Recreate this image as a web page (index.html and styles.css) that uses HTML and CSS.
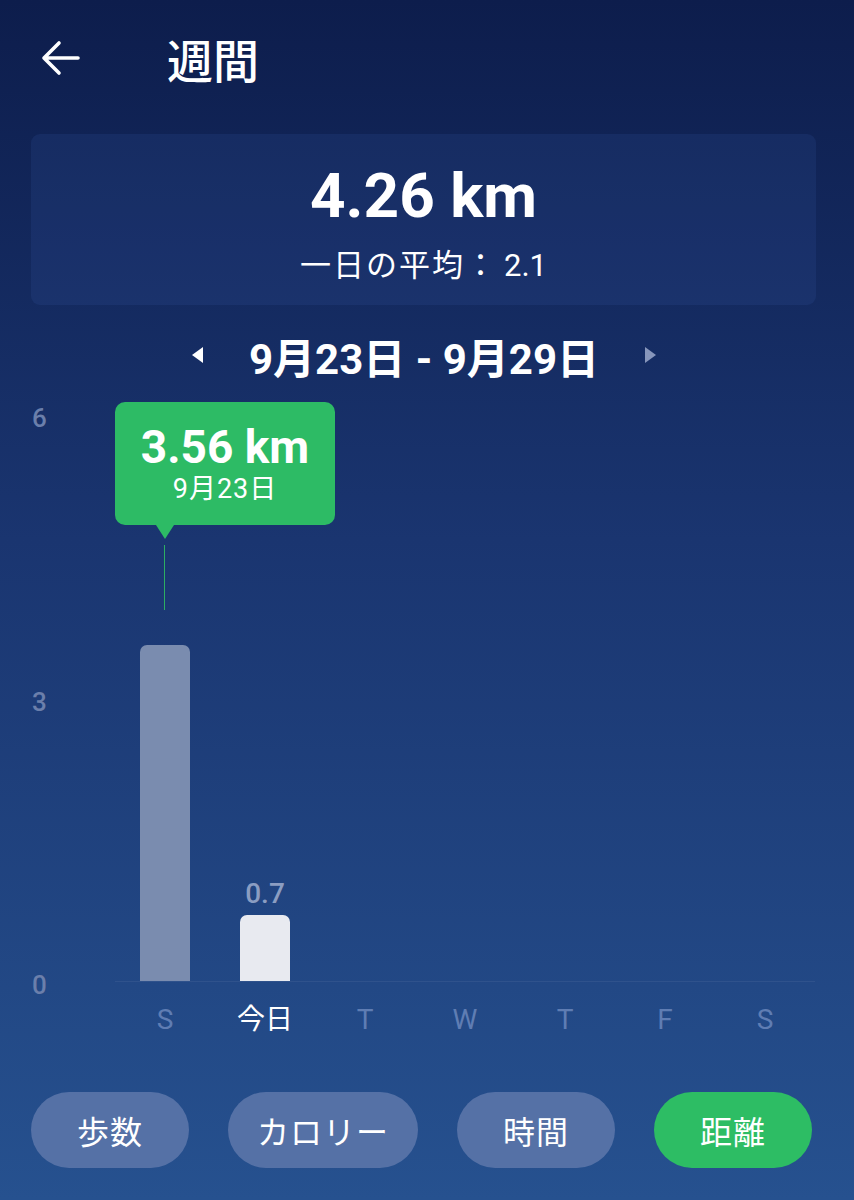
FILE: index.html
```html
<!DOCTYPE html>
<html lang="ja">
<head>
    <meta charset="UTF-8">
    <meta name="viewport" content="width=device-width, initial-scale=1.0">
    <title>週間</title>
    <link rel="stylesheet" href="styles.css">
</head>
<body>
    <!-- Cabeçalho -->
    <div class="topo">
        <svg class="voltar" width="40" height="40" viewBox="0 0 40 40">
            <path d="M38 20H4M19 5L4 20L19 35" fill="none" stroke="#fff" stroke-width="3.6" stroke-linecap="round" stroke-linejoin="round"/>
        </svg>
        <span class="titulo">週間</span>
    </div>

    <!-- Resumo -->
    <div class="resumo">
        <div class="total">4.26 km</div>
        <div class="media">一日の平均：<span class="numero">2.1</span></div>
    </div>

    <!-- Período -->
    <div class="periodo">
        <span class="seta esquerda"></span>
        <span class="datas">9月23日 - 9月29日</span>
        <span class="seta direita"></span>
    </div>

    <!-- Gráfico -->
    <div class="grafico">
        <div class="eixo">
            <span>6</span>
            <span>3</span>
            <span>0</span>
        </div>
        <div class="area">
            <div class="barras">
                <div class="coluna"><div class="barra passada" style="height: 336px"></div></div>
                <div class="coluna"><span class="valor">0.7</span><div class="barra hoje" style="height: 66px"></div></div>
                <div class="coluna"></div>
                <div class="coluna"></div>
                <div class="coluna"></div>
                <div class="coluna"></div>
                <div class="coluna"></div>

                <div class="dica">
                    <div class="dica-valor">3.56 km</div>
                    <div class="dica-data">9月23日</div>
                </div>
                <div class="dica-linha"></div>
            </div>
            <div class="dias">
                <span>S</span>
                <span class="ativo">今日</span>
                <span>T</span>
                <span>W</span>
                <span>T</span>
                <span>F</span>
                <span>S</span>
            </div>
        </div>
    </div>

    <!-- Abas -->
    <div class="abas">
        <button>歩数</button>
        <button>カロリー</button>
        <button>時間</button>
        <button class="selecionada">距離</button>
    </div>
</body>
</html>
```

FILE: styles.css
```css
body {
    margin: 0;
    width: 854px;
    height: 1200px;
    overflow: hidden;
    font-family: Roboto, "Noto Sans CJK JP", sans-serif;
    color: #fff;
    background: linear-gradient(#0d1d4c 0%, #1a3570 45%, #26518f 100%);
}
.topo {
    height: 116px;
    display: flex;
    align-items: center;
    padding-left: 40px;
}
.titulo {
    margin-left: 87px;
    font-size: 46px;
    font-weight: 500;
}
.resumo {
    margin: 18px 38px 0 31px;
    height: 171px;
    border-radius: 9px;
    background: rgba(70, 110, 190, 0.13);
    text-align: center;
    box-sizing: border-box;
    padding-top: 26px;
}
.total {
    font-size: 62px;
    font-weight: 700;
    line-height: 72px;
}
.media {
    margin-top: 14px;
    font-size: 31px;
    line-height: 40px;
    letter-spacing: 2px;
}
.media .numero {
    margin-left: 6px;
    letter-spacing: 0;
}
.periodo {
    margin-top: 20px;
    height: 60px;
    display: flex;
    align-items: center;
    justify-content: center;
    gap: 46px;
    padding-right: 6px;
}
.datas {
    font-size: 42px;
    font-weight: 700;
}
.seta {
    width: 0;
    height: 0;
    border-top: 8px solid transparent;
    border-bottom: 8px solid transparent;
}
.esquerda {
    border-right: 11px solid #fff;
}
.direita {
    border-left: 11px solid #8796bb;
}
.grafico {
    display: flex;
    align-items: flex-start;
}
.eixo {
    width: 115px;
    height: 615px;
    box-sizing: border-box;
    padding: 18px 0 0 32px;
    display: flex;
    flex-direction: column;
    justify-content: space-between;
    font-size: 26px;
    font-weight: 500;
    line-height: 30px;
    color: #6b7fab;
}
.area {
    width: 700px;
}
.barras {
    position: relative;
    height: 596px;
    display: grid;
    grid-template-columns: repeat(7, 1fr);
    border-bottom: 1px solid rgba(255, 255, 255, 0.06);
}
.coluna {
    display: flex;
    flex-direction: column;
    justify-content: flex-end;
    align-items: center;
}
.barra {
    width: 50px;
    border-radius: 7px 7px 0 0;
}
.passada {
    background: #7a8caf;
}
.hoje {
    background: #e8eaf0;
}
.valor {
    font-size: 28px;
    font-weight: 500;
    color: #8b9dc2;
    line-height: 30px;
    margin-bottom: 6px;
}
.dica {
    position: absolute;
    left: 0;
    top: 17px;
    width: 220px;
    height: 123px;
    box-sizing: border-box;
    padding-top: 20px;
    border-radius: 10px;
    background: #2dbb65;
    text-align: center;
}
.dica::after {
    content: "";
    position: absolute;
    left: 41px;
    bottom: -14px;
    border-left: 9px solid transparent;
    border-right: 9px solid transparent;
    border-top: 14px solid #2dbb65;
}
.dica-valor {
    font-size: 46px;
    font-weight: 700;
    line-height: 50px;
}
.dica-data {
    font-size: 27px;
    line-height: 34px;
    letter-spacing: 1px;
}
.dica-linha {
    position: absolute;
    left: 49px;
    top: 160px;
    width: 1px;
    height: 65px;
    background: #2cae62;
}
.dias {
    margin-top: 18px;
    height: 40px;
    display: grid;
    grid-template-columns: repeat(7, 1fr);
    text-align: center;
    font-size: 28px;
    line-height: 40px;
    color: #5f7db3;
}
.dias .ativo {
    color: #fff;
}
.abas {
    margin-top: 52px;
    padding-left: 31px;
    display: flex;
    gap: 39px;
}
.abas button {
    height: 76px;
    min-width: 158px;
    padding: 0 29px;
    border: none;
    border-radius: 38px;
    background: #5571a6;
    color: #fff;
    font-family: Roboto, "Noto Sans CJK JP", sans-serif;
    font-size: 32px;
    letter-spacing: 1px;
}
.abas .selecionada {
    background: #2dbd64;
}
```
